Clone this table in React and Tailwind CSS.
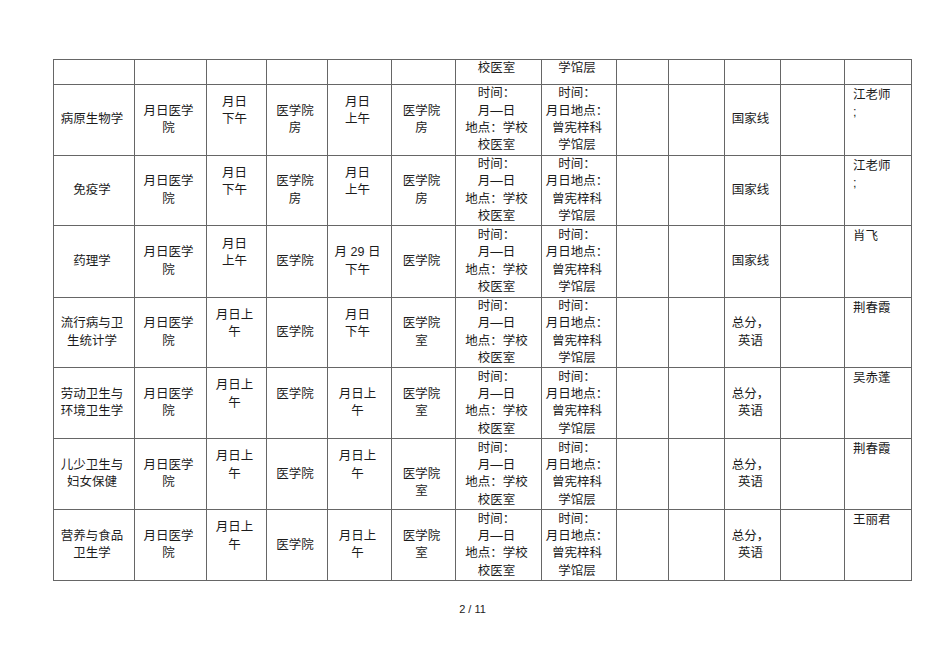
import React from "react";

const COLS = [
  "w-[81px]", "w-[72px]", "w-[60px]", "w-[61px]", "w-[64px]", "w-[64px]", "w-[86px]",
  "w-[75px]", "w-[52px]", "w-[56px]", "w-[56px]", "w-[64px]", "w-[67px]",
];

const TIME = "时间：\n月—日\n地点：学校\n校医室";
const PLACE = "时间：\n月日地点：\n曾宪梓科\n学馆层";

// each row: height class + cells; "\n" breaks lines, " " is a blank line
const ROWS = [
  { h: "h-[25px]", top: true, cells: ["", "", "", "", "", "", "校医室", "学馆层", "", "", "", "", ""] },
  { h: "h-[71px]", cells: ["病原生物学", "月日医学\n院", "月日\n下午\n ", "医学院\n房", "月日\n上午\n ", "医学院\n房", TIME, PLACE, "", "", "国家线", "", "江老师\n;"] },
  { h: "h-[70px]", cells: ["免疫学", "月日医学\n院", "月日\n下午\n ", "医学院\n房", "月日\n上午\n ", "医学院\n房", TIME, PLACE, "", "", "国家线", "", "江老师\n;"] },
  { h: "h-[72px]", cells: ["药理学", "月日医学\n院", "月日\n上午\n ", "医学院", "月 29 日\n下午", "医学院", TIME, PLACE, "", "", "国家线", "", "肖飞"] },
  { h: "h-[70px]", cells: ["流行病与卫\n生统计学", "月日医学\n院", "月日上\n午\n ", "医学院", "月日\n下午\n ", "医学院\n室", TIME, PLACE, "", "", "总分，\n英语", "", "荆春霞"] },
  { h: "h-[71px]", cells: ["劳动卫生与\n环境卫生学", "月日医学\n院", "月日上\n午\n ", "医学院\n ", "月日上\n午", "医学院\n室", TIME, PLACE, "", "", "总分，\n英语", "", "吴赤蓬"] },
  { h: "h-[71px]", cells: ["儿少卫生与\n妇女保健", "月日医学\n院", "月日上\n午\n ", "医学院", "月日上\n午\n ", " \n医学院\n室", TIME, PLACE, "", "", "总分，\n英语", "", "荆春霞"] },
  { h: "h-[71px]", cells: ["营养与食品\n卫生学", "月日医学\n院", "月日上\n午\n ", "医学院", "月日上\n午", "医学院\n室", TIME, PLACE, "", "", "总分，\n英语", "", "王丽君"] },
];

function Lines({ text }) {
  const parts = text.split("\n");
  return parts.map((p, i) => (
    <React.Fragment key={i}>
      {p === " " ? "\u00a0" : p}
      {i < parts.length - 1 && <br />}
    </React.Fragment>
  ));
}

export default function App() {
  return (
    <div className="w-[950px] h-[672px] bg-white text-[#1c1c1c] overflow-hidden font-['Liberation_Sans','Noto_Sans_CJK_SC',sans-serif]">
      <div className="pt-[59px] pl-[53px]">
        <table className="border-collapse table-fixed w-[858px] text-[12.5px] leading-[17.3px]">
          <colgroup>
            {COLS.map((w, i) => (
              <col key={i} className={w} />
            ))}
          </colgroup>
          <tbody>
            {ROWS.map((row, r) => (
              <tr key={r} className={row.h}>
                {row.cells.map((c, i) => {
                  let cls = "border border-[#666] p-0 whitespace-nowrap ";
                  if (row.top) cls += "align-top text-center pr-[4px]";
                  else if (i === 12) cls += "align-top text-left pl-[8px] pt-[2px]";
                  else cls += "align-middle text-center pl-[1px] pr-[5px]";
                  return (
                    <td key={i} className={cls}>
                      <Lines text={c} />
                    </td>
                  );
                })}
              </tr>
            ))}
          </tbody>
        </table>
      </div>

      {/* page number */}
      <div className="mt-[21px] w-[945px] text-center text-[11px] leading-[14px] text-[#222]">
        2 / 11
      </div>
    </div>
  );
}
